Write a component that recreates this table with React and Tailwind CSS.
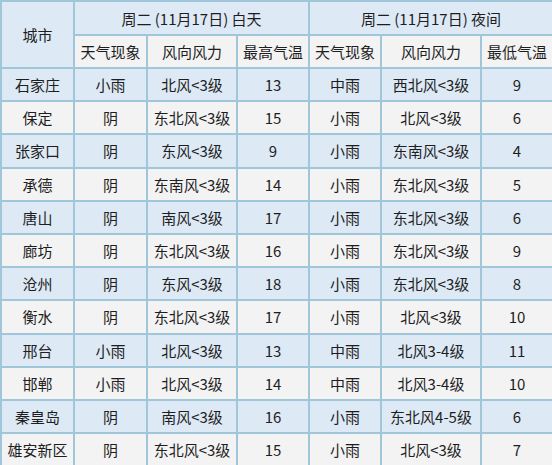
const DAY = '周二 (11月17日) 白天'
const NIGHT = '周二 (11月17日) 夜间'

const rows = [
  ['石家庄', '小雨', '北风<3级', '13', '中雨', '西北风<3级', '9'],
  ['保定', '阴', '东北风<3级', '15', '小雨', '北风<3级', '6'],
  ['张家口', '阴', '东风<3级', '9', '小雨', '东南风<3级', '4'],
  ['承德', '阴', '东南风<3级', '14', '小雨', '东北风<3级', '5'],
  ['唐山', '阴', '南风<3级', '17', '小雨', '东北风<3级', '6'],
  ['廊坊', '阴', '东北风<3级', '16', '小雨', '东北风<3级', '9'],
  ['沧州', '阴', '东风<3级', '18', '小雨', '东北风<3级', '8'],
  ['衡水', '阴', '东北风<3级', '17', '小雨', '北风<3级', '10'],
  ['邢台', '小雨', '北风<3级', '13', '中雨', '北风3-4级', '11'],
  ['邯郸', '小雨', '北风<3级', '14', '中雨', '北风3-4级', '10'],
  ['秦皇岛', '阴', '南风<3级', '16', '小雨', '东北风4-5级', '6'],
  ['雄安新区', '阴', '东北风<3级', '15', '小雨', '北风<3级', '7'],
]

const subHeads = ['天气现象', '风向风力', '最高气温', '天气现象', '风向风力', '最低气温']

// shared cell look: 2px steel-blue grid, centered text
const cell = 'border-2 border-[#9fc7d9] text-center align-middle p-0 whitespace-nowrap'

export default function App() {
  return (
    <div
      className="w-[552px] h-[465px] bg-white text-[15px] leading-none text-[#1e1e1e]"
      style={{ fontFamily: '"Noto Sans CJK SC", "Noto Sans", sans-serif' }}
    >
      <table className="w-[552px] table-fixed border-collapse">
        <colgroup>
          <col className="w-[73px]" />
          <col className="w-[73px]" />
          <col className="w-[90px]" />
          <col className="w-[72px]" />
          <col className="w-[72px]" />
          <col className="w-[100px]" />
          <col className="w-[72px]" />
        </colgroup>
        <thead>
          <tr className="h-[34px] bg-[#dde9f5]">
            <th rowSpan={2} className={`${cell} font-normal`}>城市</th>
            <th colSpan={3} className={`${cell} font-normal`}>{DAY}</th>
            <th colSpan={3} className={`${cell} font-normal`}>{NIGHT}</th>
          </tr>
          <tr className="h-[33px]">
            {subHeads.map((h, i) => (
              <th key={i} className={`${cell} font-normal bg-[#f3f3f4]`}>{h}</th>
            ))}
          </tr>
        </thead>
        <tbody>
          {rows.map((r, i) => (
            <tr key={r[0]} className={`h-[33.2px] ${i % 2 === 0 ? 'bg-[#dde9f5]' : 'bg-[#f3f3f4]'}`}>
              {r.map((v, j) => (
                <td key={j} className={cell}>{v}</td>
              ))}
            </tr>
          ))}
        </tbody>
      </table>
    </div>
  )
}
